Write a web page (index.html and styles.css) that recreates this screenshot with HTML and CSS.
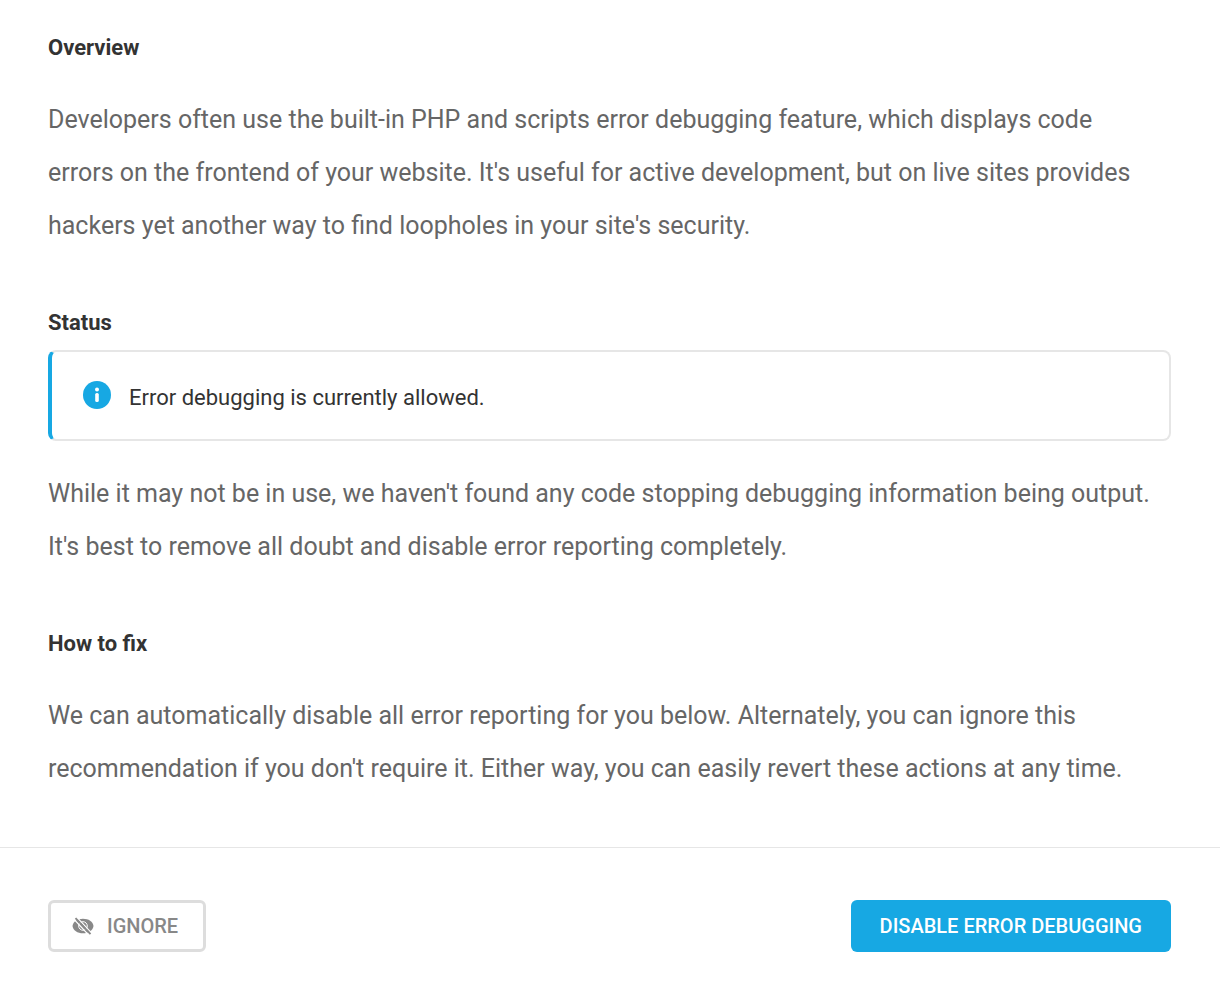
FILE: index.html
```html
<!doctype html>
<html lang="en">
<head>
<meta charset="utf-8">
<title>Error debugging</title>
<link rel="stylesheet" href="styles.css">
</head>

<body>
	<div class="content">
		<section class="block">
			<h2>Overview</h2>
			<p>Developers often use the built-in PHP and scripts error debugging feature, which displays code errors on the frontend of your website. It's useful for active development, but on live sites provides hackers yet another way to find loopholes in your site's security.</p>
		</section>
		<section class="block status">
			<h2>Status</h2>
			<div class="notice">
				<svg class="notice-icon" viewBox="0 0 28 28" aria-hidden="true">
					<circle cx="14" cy="14" r="14" fill="#17a8e3"/>
					<circle cx="14" cy="8.6" r="2" fill="#fff"/>
					<rect x="12.2" y="12" width="3.6" height="9" rx="1.6" fill="#fff"/>
				</svg>
				<span>Error debugging is currently allowed.</span>
			</div>
			<p>While it may not be in use, we haven't found any code stopping debugging information being output. It's best to remove all doubt and disable error reporting completely.</p>
		</section>
		<section class="block">
			<h2>How to fix</h2>
			<p>We can automatically disable all error reporting for you below. Alternately, you can ignore this recommendation if you don't require it. Either way, you can easily revert these actions at any time.</p>
		</section>
	</div>
	<div class="footer">
		<button type="button" class="btn btn-ghost">
			<svg class="btn-icon" viewBox="0 0 22 18" aria-hidden="true">
				<path d="M.5 9C1 4.5 5.5 1.7 11 1.7S21 4.5 21.5 9c-.5 4.5-5 7.300-10.500 7.300S1 13.500.5 9z" fill="#888"/>
				<circle cx="11" cy="9" r="4.3" fill="none" stroke="#fff" stroke-width="1"/>
				<path d="M5 .5l14.500 15.500M2.200 2.500l14 15" stroke="#fff" stroke-width="1.1"/>
				<path d="M3.500 1.200l15 16" stroke="#888" stroke-width="1.900"/>
			</svg>
			Ignore
		</button>
		<button type="button" class="btn btn-blue">Disable error debugging</button>
	</div>
</body>
</html>
```
FILE: styles.css
```css
*{
	margin: 0;
	padding: 0;
	box-sizing: border-box;
}
body{
	font-family: Roboto, "Liberation Sans", sans-serif;
	color: #333;
	background: #fff;
}
.content{
	padding: 26px 49px 52px 48px;
}
.block{
	margin-bottom: 49px;
}
.block:last-child{
	margin-bottom: 0;
}
h2{
	font-size: 22px;
	line-height: 44px;
	font-weight: 700;
	margin-bottom: 23px;
}
p{
	padding-right: 8px;
	font-size: 25px;
	line-height: 53px;
	color: #666;
}
.status h2{
	margin-bottom: 5px;
}
.notice{
	display: flex;
	align-items: flex-start;
	gap: 18px;
	padding: 29px 31px 25px;
	margin-bottom: 26px;
	border: 2px solid #e6e6e6;
	border-left: 4px solid #17a8e3;
	border-radius: 8px;
	font-size: 22px;
	line-height: 33px;
}
.notice-icon{
	flex: none;
	width: 28px;
	height: 28px;
}
.footer{
	display: flex;
	justify-content: space-between;
	padding: 52px 49px 40px 48px;
	border-top: 1px solid #e6e6e6;
}
.btn{
	display: flex;
	align-items: center;
	height: 52px;
	border: 0;
	border-radius: 6px;
	font-family: inherit;
	font-size: 20px;
	font-weight: 500;
	text-transform: uppercase;
	cursor: pointer;
}
.btn-ghost{
	gap: 13px;
	padding: 0 25px 0 21px;
	border: 3px solid #ddd;
	background: #fff;
	color: #888;
}
.btn-icon{
	width: 22px;
	height: 18px;
}
.btn-blue{
	padding: 0 29px;
	background: #17a8e3;
	color: #fff;
}
```
